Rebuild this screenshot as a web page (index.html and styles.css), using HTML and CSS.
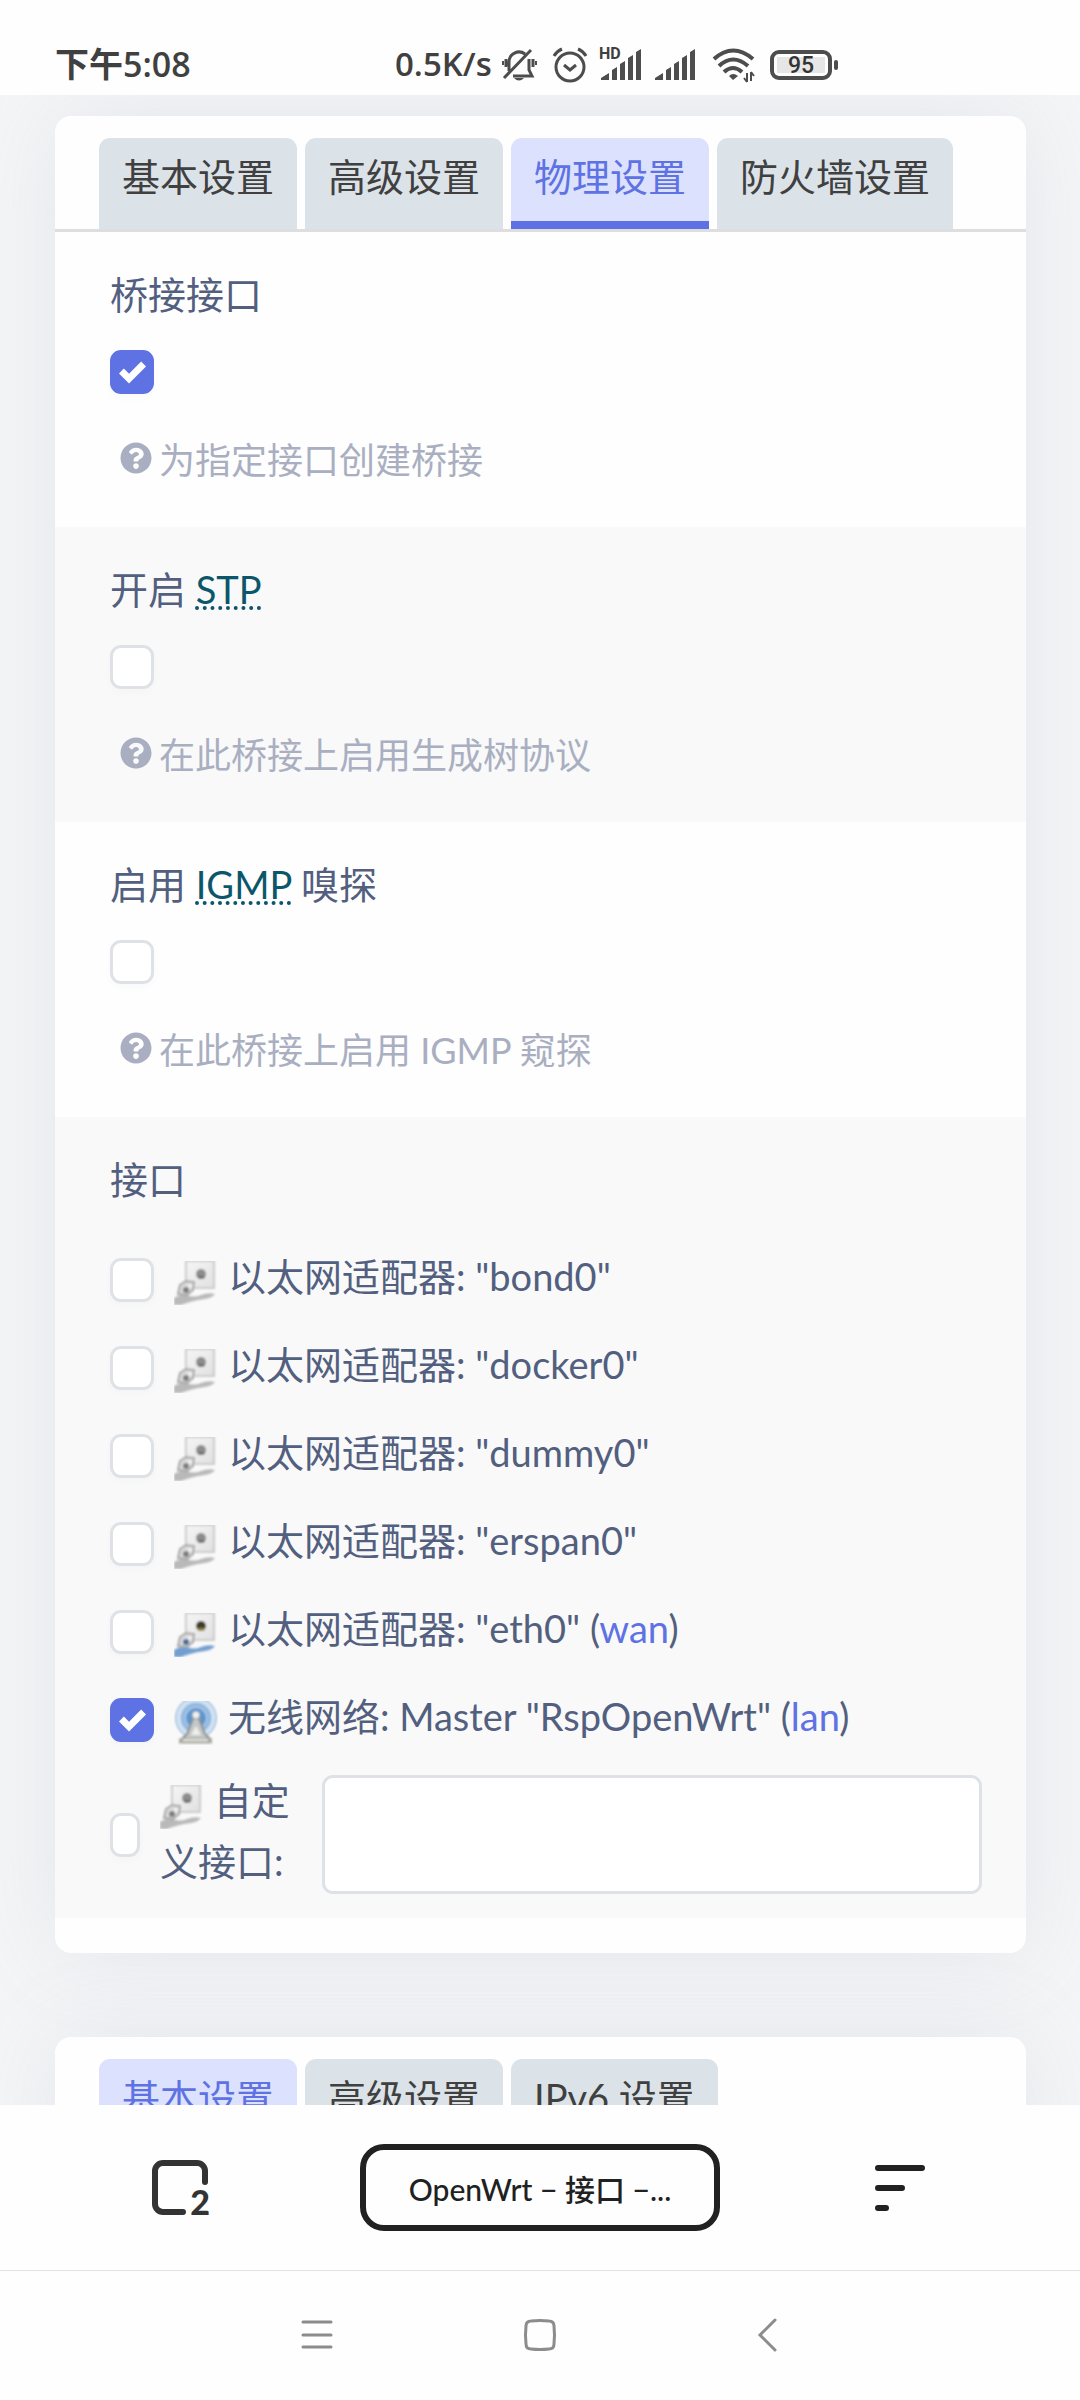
FILE: index.html
```
<!DOCTYPE html>
<html lang="zh-CN">
<head>
<meta charset="utf-8">
<meta name="viewport" content="width=device-width, initial-scale=1">
<title>OpenWrt - 接口</title>
<link rel="stylesheet" href="styles.css">
</head>
<body>
<svg class="sprite" aria-hidden="true">
  <defs>
    <filter id="soft" x="-10%" y="-10%" width="120%" height="120%"><feGaussianBlur stdDeviation="0.8"/></filter>
    <linearGradient id="plate" x1="0" y1="0" x2="1" y2="1"><stop offset="0" stop-color="#f6f6f6"/><stop offset="1" stop-color="#e0e0e0"/></linearGradient>
    <symbol id="port" viewBox="0 0 44 44">
      <g filter="url(#soft)">
        <rect x="12" y="0" width="28" height="27" fill="url(#plate)" stroke="#cccccc" stroke-width="2"/>
        <circle cx="27" cy="13" r="5" class="port-hole"/>
        <path d="M23 15H31V17L28 18H25Z" class="port-pin"/>
        <path d="M0 44V37Q6 33 13 34Q20 37 27 34Q34 31 41 33Q38 37 31 38Q22 39 16 41Q9 43 7 44Z" class="port-cable"/>
        <path d="M6 24L12 20L20 21L19 29L13 34L4 33Z" fill="#dadada" stroke="#a8a8a8" stroke-width="2"/>
        <circle cx="12" cy="29" r="3" class="port-plug"/><circle cx="16" cy="25" r="2" fill="#f4f4f4"/>
      </g>
    </symbol>
    <symbol id="help" viewBox="0 0 512 512"><path fill="currentColor" d="M504 256c0 136.997-111.043 248-248 248S8 392.997 8 256C8 119.083 119.043 8 256 8s248 111.083 248 248zM262.655 90c-54.497 0-89.255 22.957-116.549 63.758-3.536 5.286-2.353 12.415 2.715 16.258l34.699 26.31c5.205 3.947 12.621 3.008 16.665-2.122 17.864-22.658 30.113-35.797 57.303-35.797 20.429 0 45.698 13.148 45.698 32.958 0 14.976-12.363 22.667-32.534 33.976C247.128 238.528 216 254.941 216 296v4c0 6.627 5.373 12 12 12h56c6.627 0 12-5.373 12-12v-1.333c0-28.462 83.186-29.647 83.186-106.667 0-58.002-60.165-102-116.531-102zM256 338c-25.365 0-46 20.635-46 46 0 25.364 20.635 46 46 46s46-20.636 46-46c0-25.365-20.635-46-46-46z"/></symbol>
  </defs>
</svg>
<div class="screen">
  <header class="status">
    <span class="clock">下午5:08</span>
    <span class="rate">0.5K/s</span>
    <span class="status-icons">
      <svg class="ic-bell" viewBox="0 0 34 34" fill="none" stroke="#4d4d4d" stroke-width="3">
        <path d="M7 23V14A10 10 0 0 1 23 6M27 11V22L30 28H11M4 11V19M31 11V19M2 30L29 2"/><path d="M1 13V17M34 13V17" stroke-width="2"/><path d="M12 30H22Q17 35 12 30Z" fill="#4d4d4d" stroke="none"/></svg>
      <svg class="ic-alarm" viewBox="0 0 36 36" fill="none" stroke="#4d4d4d" stroke-width="3"><circle cx="18" cy="20" r="14"/><path d="M12 18L18 23L24 18M2 9Q5 4 10 2M34 9Q31 4 26 2"/></svg>
      <span class="hd"><svg class="ic-signal" viewBox="0 0 42 34" fill="#4d4d4d"><path d="M0 32V30L8 25V32ZM11 32V22L16 19V32ZM19 32V16L24 13V32ZM27 32V10L32 7V32ZM35 32V4L40 1V32Z"/></svg><b class="hd-text">HD</b></span>
      <svg class="ic-signal" viewBox="0 0 42 34" fill="#4d4d4d"><path d="M0 32V30L8 25V32ZM11 32V22L16 19V32ZM19 32V16L24 13V32ZM27 32V10L32 7V32ZM35 32V4L40 1V32Z"/></svg>
      <svg class="ic-wifi" viewBox="0 0 44 36" fill="none" stroke="#4d4d4d" stroke-width="4"><path d="M2 12Q21 -5 41 12M7 19Q21 6 36 19M12 25Q21 17 30 25"/><path d="M17 29Q21 25 26 29L21 33Z" fill="#4d4d4d" stroke="none"/><path d="M35 26V35M39 25V34M32 31L35 35M42 29L39 25" stroke-width="2"/></svg>
      <span class="battery"><span class="level">95</span></span>
    </span>
  </header>
  <main class="page">
    <section class="card">
      <nav class="tabs">
        <a class="tab" href="#general">基本设置</a>
        <a class="tab" href="#advanced">高级设置</a>
        <a class="tab active" href="#physical">物理设置</a>
        <a class="tab" href="#firewall">防火墙设置</a>
      </nav>
      <div class="row">
        <label class="title" for="bridge">桥接接口</label>
        <input class="check" type="checkbox" id="bridge" checked>
        <p class="help"><svg class="help-icon"><use href="#help"/></svg>为指定接口创建桥接</p>
      </div>
      <div class="row shaded">
        <label class="title" for="stp">开启 <abbr>STP</abbr></label>
        <input class="check" type="checkbox" id="stp">
        <p class="help"><svg class="help-icon"><use href="#help"/></svg>在此桥接上启用生成树协议</p>
      </div>
      <div class="row">
        <label class="title" for="igmp">启用 <abbr>IGMP</abbr> 嗅探</label>
        <input class="check" type="checkbox" id="igmp">
        <p class="help"><svg class="help-icon"><use href="#help"/></svg>在此桥接上启用 IGMP 窥探</p>
      </div>
      <div class="row shaded interfaces">
        <div class="title">接口</div>
        <ul class="list">
          <li class="item"><input class="check" type="checkbox" id="if0"><label class="device" for="if0"><svg class="port"><use href="#port"/></svg>以太网适配器: "bond0"</label></li>
          <li class="item"><input class="check" type="checkbox" id="if1"><label class="device" for="if1"><svg class="port"><use href="#port"/></svg>以太网适配器: "docker0"</label></li>
          <li class="item"><input class="check" type="checkbox" id="if2"><label class="device" for="if2"><svg class="port"><use href="#port"/></svg>以太网适配器: "dummy0"</label></li>
          <li class="item"><input class="check" type="checkbox" id="if3"><label class="device" for="if3"><svg class="port"><use href="#port"/></svg>以太网适配器: "erspan0"</label></li>
          <li class="item"><input class="check" type="checkbox" id="if4"><label class="device" for="if4"><svg class="port live"><use href="#port"/></svg>以太网适配器: "eth0" (<a href="#wan">wan</a>)</label></li>
          <li class="item"><input class="check" type="checkbox" id="if5" checked><label class="device" for="if5"><svg class="port" viewBox="0 0 44 44"><g filter="url(#soft)"><circle cx="22" cy="17" r="20" fill="#dfeaf6" stroke="#a9c6e4" stroke-width="2"/><circle cx="22" cy="17" r="16" fill="#8fb6de" stroke="#c5daef" stroke-width="2"/><circle cx="22" cy="17" r="11" fill="#5e95d0" stroke="#a8c7e7" stroke-width="2"/><path d="M20 15L13 33L8 38H36L31 33L24 15Z" fill="#c4c8c8" stroke="#8a8f90" stroke-width="2"/><path d="M17 34L22 25L27 34Z" fill="#eeeeea"/><path d="M5 40H38" stroke="#aaa9a1" stroke-width="5"/><path d="M9 39H34" stroke="#e8e7e0" stroke-width="2"/><circle cx="22" cy="14" r="4" fill="#eef1f2" stroke="#8c9aa5"/></g></svg>无线网络: Master "RspOpenWrt" (<a href="#lan">lan</a>)</label></li>
          <li class="item custom"><input class="check narrow" type="checkbox" id="if6"><label class="device wrap" for="if6"><svg class="port"><use href="#port"/></svg> 自定义接口:</label><input class="field" type="text" aria-label="自定义接口"></li>
        </ul>
      </div>
    </section>
    <section class="card">
      <nav class="tabs">
        <a class="tab active" href="#dhcp-general">基本设置</a>
        <a class="tab" href="#dhcp-advanced">高级设置</a>
        <a class="tab" href="#dhcp-ipv6">IPv6 设置</a>
      </nav>
    </section>
  </main>
  <footer class="toolbar">
    <button class="tool" type="button" aria-label="标签页"><svg class="ic-tabs" viewBox="0 0 60 60"><path d="M33 54H13A8 8 0 0 1 5 46V13A8 8 0 0 1 13 5H47A8 8 0 0 1 55 13V24" fill="none" stroke="#333" stroke-width="6" stroke-linecap="round"/></svg><b class="count">2</b></button>
    <button class="address" type="button">OpenWrt − 接口 −...</button>
    <button class="tool" type="button" aria-label="菜单"><svg class="ic-menu" viewBox="0 0 50 46" fill="none" stroke="#212121" stroke-width="6" stroke-linecap="round"><path d="M3 3H47M3 23H27M3 43H11"/></svg></button>
  </footer>
  <nav class="system">
    <button class="key" type="button" aria-label="最近任务"><svg class="ic-key" viewBox="0 0 34 34"><path d="M4 4H32M4 17H32M4 29H32"/></svg></button>
    <button class="key" type="button" aria-label="主屏幕"><svg class="ic-key" viewBox="0 0 34 34"><path d="M8 3Q17 2 26 3Q31 3 31 8Q32 17 31 26Q31 31 26 31Q17 32 8 31Q3 31 3 26Q2 17 3 8Q3 3 8 3Z"/></svg></button>
    <button class="key" type="button" aria-label="返回"><svg class="ic-key" viewBox="0 0 34 34"><path d="M28 2L13 17L28 32"/></svg></button>
  </nav>
</div>
</body>
</html>
```
FILE: styles.css
```
* { box-sizing: border-box; }
body {
  margin: 0;
  background: #fefefe;
  color: #525f7f;
  font-family: Lato, "Noto Sans CJK SC", sans-serif;
  font-size: 38px;
}
a { color: #5e72e4; text-decoration: none; }
button { padding: 0; border: 0; background: none; font-family: inherit; }
svg { display: block; flex: none; }
.sprite { position: absolute; width: 0; height: 0; }
.screen { display: flex; flex-direction: column; height: 100vh; }

.status {
  display: flex;
  align-items: center;
  flex: none;
  height: 95px;
  padding: 34px 55px 0;
  color: #404040;
  font: 600 34px/48px "Open Sans", "Noto Sans CJK SC", sans-serif;
}
.clock { width: 340px; padding-bottom: 2px; }
.rate { width: 107px; padding-bottom: 2px; font-size: 33px; }
.status-icons { display: flex; align-items: center; }
.ic-bell { width: 34px; height: 34px; margin-right: 16px; overflow: visible; }
.ic-alarm { width: 36px; height: 36px; margin-right: 13px; }
.hd { position: relative; margin-right: 12px; }
.hd-text { position: absolute; left: -2px; top: -3px; font: 700 16px/18px Roboto, sans-serif; }
.ic-signal { width: 42px; height: 34px; }
.ic-wifi { width: 44px; height: 36px; margin: 0 14px 0 15px; }
.battery {
  position: relative;
  width: 62px;
  height: 30px;
  padding: 3px;
  border: 4px solid #4d4d4d;
  border-radius: 9px;
}
.battery::after {
  content: "";
  position: absolute;
  right: -10px;
  top: 6px;
  width: 4px;
  height: 10px;
  border-radius: 2px;
  background: #4d4d4d;
}
.level {
  display: block;
  height: 16px;
  background: #e6e6e6;
  color: #333;
  font: 500 23px/17px Roboto, sans-serif;
  text-align: center;
}

.page {
  flex: 1;
  min-height: 0;
  overflow: hidden;
  padding: 21px 54px 0 55px;
  background: #f4f5f7;
}
.card {
  margin-bottom: 84px;
  padding-bottom: 35px;
  border-radius: 16px;
  background: #fefefe;
  box-shadow: 0 0 88px rgba(136, 152, 170, .15);
}
.tabs {
  display: flex;
  gap: 8px;
  padding: 22px 44px 0;
  border-bottom: 3px solid #dedede;
}
.tab {
  height: 91px;
  padding: 0 23px;
  border-radius: 11px 11px 0 0;
  background: #dce3e8;
  color: #404040;
  line-height: 76px;
  white-space: nowrap;
}
.tab.active { border-bottom: 8px solid #5e72e4; background: #dce1fe; color: #5e72e4; }

.row { padding: 32px 44px 39px 55px; }
.shaded { background: #f9f9f9; }
.title { display: block; margin-bottom: 26px; line-height: 60px; }
abbr {
  color: #0b566b;
  text-decoration: underline dotted 4px;
  text-underline-offset: 2px;
  text-decoration-skip-ink: none;
}
.check {
  appearance: none;
  display: block;
  flex: none;
  width: 44px;
  height: 44px;
  margin: 0;
  border: 3px solid #dee2e6;
  border-radius: 11px;
  background: #fff;
  box-shadow: 0 4px 8px rgba(50, 50, 93, .02);
}
.check:checked {
  border-color: #5e72e4;
  background: #5e72e4 url("data:image/svg+xml,%3Csvg xmlns='http://www.w3.org/2000/svg' viewBox='0 0 8 8'%3E%3Cpath fill='%23fff' d='M6.564.75l-3.59 3.612-1.538-1.55L0 4.26 2.974 7.25 8 2.193z'/%3E%3C/svg%3E") center / 27px 27px no-repeat;
}
.help {
  display: flex;
  align-items: center;
  gap: 7px;
  height: 60px;
  margin: 34px 0 0 10px;
  color: #a9afc1;
  font-size: 36px;
}
.help-icon { width: 32px; height: 32px; }

.interfaces { padding-bottom: 24px; }
.list { margin: 0; padding: 0; list-style: none; }
.title + .list { margin-top: 49px; }
.item { display: flex; align-items: center; height: 44px; margin-bottom: 44px; }
.device { margin-left: 20px; padding-bottom: 8px; line-height: 61px; }
.port { display: inline-block; width: 44px; height: 44px; margin-right: 10px; vertical-align: -14px; }
.port-hole { fill: var(--hole, #8c8c8c); }
.port-pin { fill: var(--pin, #707070); }
.port-cable { fill: var(--cable, #b9b9b9); }
.port-plug { fill: var(--plug, #7c7c7c); }
.live { --hole: #3c3a2c; --pin: #8f8130; --cable: #739fd0; --plug: #3f6b9c; }
.item.custom { height: 119px; margin: -11px 0 0; }
.check.narrow { width: 30px; }
.wrap { flex: 1; margin-right: 16px; }
.wrap .port { margin-right: 0; }
.field {
  width: 660px;
  height: 119px;
  padding: 0 24px;
  border: 3px solid #dee2e6;
  border-radius: 11px;
  background: #fff;
  color: inherit;
  font: inherit;
}

.toolbar {
  display: flex;
  justify-content: space-between;
  align-items: center;
  flex: none;
  height: 166px;
  padding: 0 150px;
  border-bottom: 1px solid #e4e4e4;
}
.tool { position: relative; width: 60px; height: 60px; }
.ic-tabs { width: 60px; height: 60px; }
.ic-menu { width: 50px; height: 46px; margin: 0 5px; }
.count { position: absolute; right: 0; bottom: 1px; color: #333; font: 900 34px/30px Lato, sans-serif; }
.address {
  width: 360px;
  height: 87px;
  border: 6px solid #212121;
  border-radius: 24px;
  color: #212121;
  font-size: 30px;
  font-weight: 500;
}
.system { display: flex; justify-content: center; gap: 190px; flex: none; padding: 47px 0 48px; }
.key { width: 34px; height: 34px; }
.ic-key { width: 34px; height: 34px; fill: none; stroke: #8c8c8c; stroke-width: 3; stroke-linecap: round; }
```
